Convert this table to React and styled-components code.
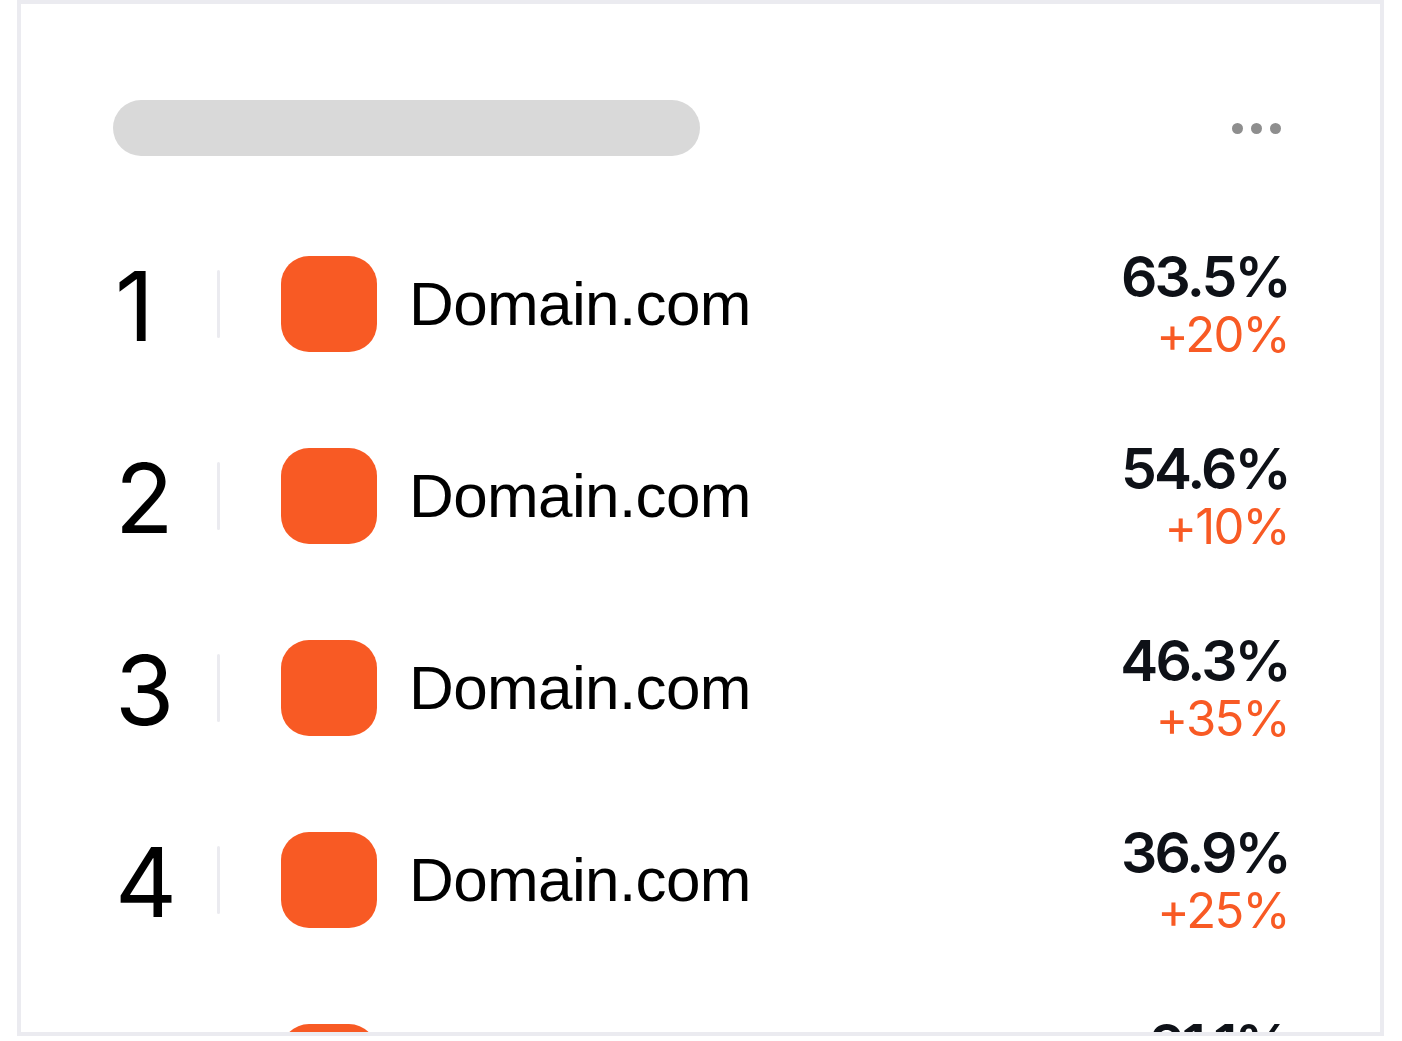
import React from "react";
import styled, { createGlobalStyle } from "styled-components";

const colors = {
  border: "#ebebf0",
  skeleton: "#d9d9d9",
  dots: "#8e8e8e",
  text: "#000000",
  value: "#0e1117",
  orange: "#f85a24",
};

const rows = [
  { rank: 1, name: "Domain.com", value: "63.5%", change: "+20%" },
  { rank: 2, name: "Domain.com", value: "54.6%", change: "+10%" },
  { rank: 3, name: "Domain.com", value: "46.3%", change: "+35%" },
  { rank: 4, name: "Domain.com", value: "36.9%", change: "+25%" },
  { rank: 5, name: "Domain.com", value: "21.1%", change: "+15%" },
];

const App = () => {
  return (
    <>
      <GlobalStyle />
      <Card>
        <Header>
          <TitleSkeleton />
          <MoreButton aria-label="more">
            <Dot />
            <Dot />
            <Dot />
          </MoreButton>
        </Header>
        <List>
          {rows.map((row) => (
            <Row key={row.rank}>
              <Rank>{row.rank}</Rank>
              <Divider />
              <Favicon />
              <DomainName>{row.name}</DomainName>
              <Stats>
                <Value>{row.value}</Value>
                <Change>{row.change}</Change>
              </Stats>
            </Row>
          ))}
        </List>
      </Card>
    </>
  );
};

export default App;

const GlobalStyle = createGlobalStyle`
  html, body {
    margin: 0;
    padding: 0;
    background: #ffffff;
  }
  body {
    font-family: "Liberation Sans", Arial, sans-serif;
  }
`;

const Card = styled.div`
  box-sizing: border-box;
  width: 1367px;
  height: 1036px;
  margin: 0 0 0 17px;
  padding: 96px 91px 0 92px;
  border: 4px solid ${colors.border};
  background: #ffffff;
  overflow: hidden;
`;

const Header = styled.div`
  display: flex;
  align-items: center;
  justify-content: space-between;
  height: 56px;
  margin-bottom: 100px;
`;

const TitleSkeleton = styled.div`
  width: 587px;
  height: 56px;
  border-radius: 28px;
  background: ${colors.skeleton};
`;

const MoreButton = styled.div`
  display: flex;
  align-items: center;
  gap: 8px;
  margin-right: 8px;
  cursor: pointer;
`;

const Dot = styled.span`
  width: 11px;
  height: 11px;
  border-radius: 50%;
  background: ${colors.dots};
`;

const List = styled.div`
  display: flex;
  flex-direction: column;
  gap: 96px;
`;

const Row = styled.div`
  display: flex;
  align-items: center;
  height: 96px;
`;

const Rank = styled.div`
  width: 104px;
  padding-top: 4px;
  padding-left: 2px;
  box-sizing: border-box;
  font-family: "Inter", "Liberation Sans", sans-serif;
  font-size: 96px;
  line-height: 1;
  color: ${colors.text};
`;

const Divider = styled.div`
  width: 3px;
  height: 68px;
  margin-right: 61px;
  border-radius: 2px;
  background: ${colors.border};
`;

const Favicon = styled.div`
  width: 96px;
  height: 96px;
  border-radius: 28px;
  background: ${colors.orange};
  flex-shrink: 0;
`;

const DomainName = styled.div`
  flex: 1;
  margin-left: 32px;
  font-family: "Liberation Sans", Arial, sans-serif;
  font-size: 62px;
  line-height: 1;
  letter-spacing: -0.01em;
  color: ${colors.text};
`;

const Stats = styled.div`
  display: flex;
  flex-direction: column;
  align-items: flex-end;
  gap: 4px;
  font-family: "Inter", "Liberation Sans", sans-serif;
`;

const Value = styled.div`
  font-size: 57px;
  font-weight: 600;
  line-height: 58px;
  letter-spacing: -0.05em;
  color: ${colors.value};
`;

const Change = styled.div`
  font-size: 49px;
  font-weight: 400;
  line-height: 50px;
  letter-spacing: -0.035em;
  color: ${colors.orange};
`;
